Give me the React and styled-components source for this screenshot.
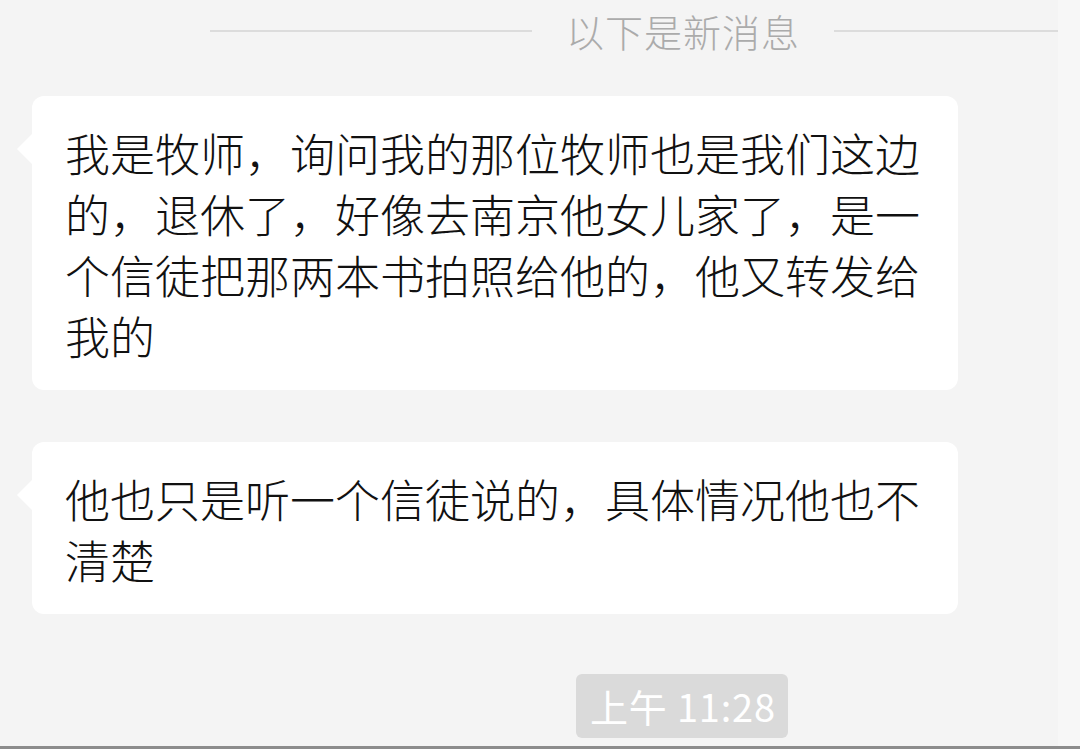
import React from "react";
import styled, { createGlobalStyle } from "styled-components";

const Global = createGlobalStyle`
  html, body {
    margin: 0;
    padding: 0;
    background: #f5f5f5;
  }
  body {
    font-family: "Noto Sans CJK SC", "Liberation Sans", sans-serif;
  }
`;

const messages = [
  "我是牧师，询问我的那位牧师也是我们这边的，退休了，好像去南京他女儿家了，是一个信徒把那两本书拍照给他的，他又转发给我的",
  "他也只是听一个信徒说的，具体情况他也不清楚",
];

const App = () => (
  <>
    <Global />
    <Page>
      <Main>
        <Divider>
          <Line width={322} />
          <DividerText>以下是新消息</DividerText>
          <Line />
        </Divider>
        <List>
          {messages.map((text, i) => (
            <Bubble key={i}>{text}</Bubble>
          ))}
        </List>
        <TimeRow>
          <TimeBadge>上午 11:28</TimeBadge>
        </TimeRow>
      </Main>
      <Gutter />
    </Page>
  </>
);

export default App;

/**
 * Styled components
 */
const Page = styled.div`
  display: flex;
  width: 1080px;
  height: 749px;
  box-sizing: border-box;
  border-bottom: 3px solid #8c8c8c;
  overflow: hidden;
`;

const Main = styled.div`
  width: 1058px;
  background: #f4f4f4;
  display: flex;
  flex-direction: column;
`;

const Gutter = styled.div`
  flex: 1;
  background: #f7f7f7;
`;

const Divider = styled.div`
  display: flex;
  align-items: center;
  gap: 34px;
  padding-left: 210px;
  height: 60px;
  margin-top: 1px;
`;

const Line = styled.div`
  flex: ${(p) => (p.width ? "none" : "1")};
  width: ${(p) => (p.width ? `${p.width}px` : "auto")};
  height: 2px;
  background: #dcdcdc;
`;

const DividerText = styled.span`
  font-size: 38px;
  font-weight: 300;
  color: #ababab;
  letter-spacing: 1px;
  line-height: 60px;
`;

const List = styled.div`
  display: flex;
  flex-direction: column;
  gap: 52px;
  padding: 35px 0 0 32px;
`;

const Bubble = styled.div`
  position: relative;
  width: 926px;
  box-sizing: border-box;
  padding: 26px 31px 24px 33px;
  background: #ffffff;
  border-radius: 12px;
  font-size: 45px;
  font-weight: 300;
  line-height: 61px;
  color: #111111;

  /* tail on the left edge */
  &::before {
    content: "";
    position: absolute;
    left: -15px;
    top: 38px;
    border-style: solid;
    border-width: 15px 15px 15px 0;
    border-color: transparent #ffffff transparent transparent;
  }
`;

const TimeRow = styled.div`
  display: flex;
  padding: 60px 0 0 576px;
`;

const TimeBadge = styled.span`
  background: #dadada;
  color: #ffffff;
  font-size: 38px;
  letter-spacing: 0.8px;
  line-height: 64px;
  padding: 0 12px 0 14px;
  border-radius: 6px;
`;
